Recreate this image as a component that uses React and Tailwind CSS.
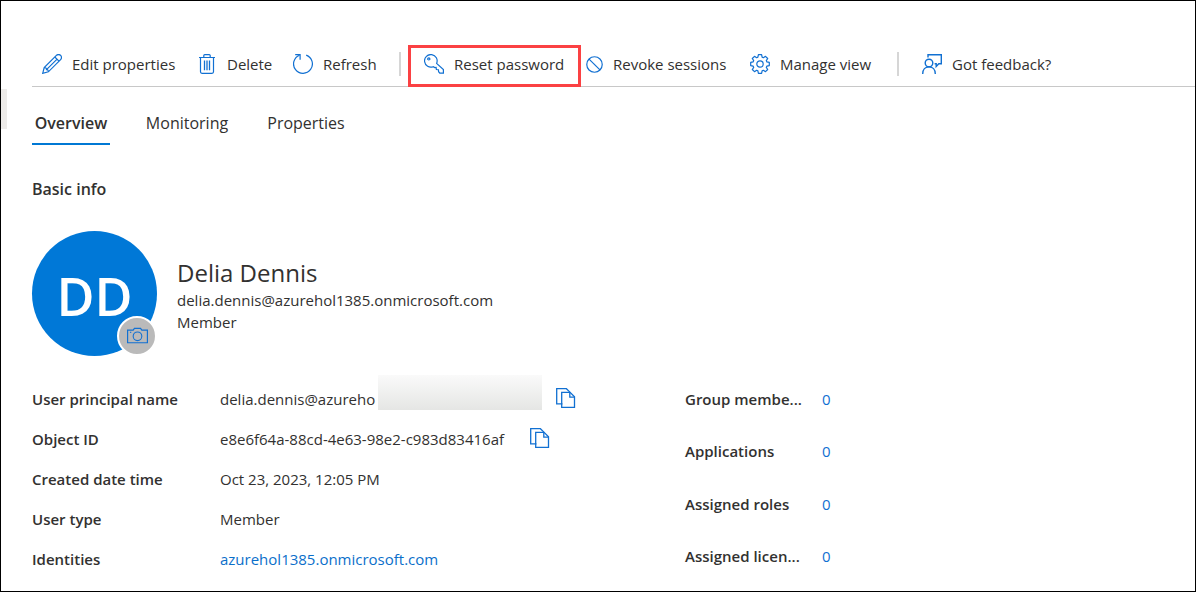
const Icon = ({ children, className = "size-5" }) => (
  <svg
    viewBox="0 0 20 20"
    fill="none"
    stroke="currentColor"
    strokeWidth="1.2"
    aria-hidden="true"
    className={`${className} shrink-0 text-[#1170d2]`}
  >
    {children}
  </svg>
);

const PencilIcon = () => (
  <Icon>
    <path d="M.7 19.3 2.2 13.6 14.4 1.4a2.7 2.7 0 0 1 4.2 4.2L6.4 17.8Z" />
    <path d="M12.8 3 17 7.2M2.2 13.6c1.9.1 2.4.7 2.3 2 1.3-.1 1.9.5 1.9 2.2M4.5 15.6 15.1 5.1" />
  </Icon>
);

const TrashIcon = () => (
  <Icon>
    <path d="M2 3.5h16M6.8 3.3V1.6q0-1 1-1h4.4q1 0 1 1v1.7" strokeWidth="1.2" />
    <path d="M3.5 3.8v14q0 1.5 1.5 1.5h10q1.5 0 1.5-1.5v-14" strokeWidth="1.2" />
    <path d="M7.5 6.5v9.7M10 6.5v9.7M12.5 6.5v9.7" strokeWidth="1.3" />
  </Icon>
);

const RefreshIcon = () => (
  <Icon>
    <path d="M13.2 1.1a9.4 9.4 0 1 1-6.7.1" />
    <path d="M2.2.7h4.9v5" />
  </Icon>
);

const KeyIcon = () => (
  <Icon>
    <path d="M12.6 9.4A6.3 6.3 0 1 0 9.2 12.7l1.6.9 1.3-.1.3 2 2 .2.2 2 1.2 1.5h3.6v-3.6Z" />
    <circle cx="4.8" cy="4.9" r="1.1" />
  </Icon>
);

const BlockIcon = () => (
  <Icon className="size-[17px]">
    <circle cx="10" cy="10" r="9.1" strokeWidth="1.4" />
    <path d="m3.6 3.6 12.8 12.8" strokeWidth="1.4" />
  </Icon>
);

const GearIcon = () => (
  <Icon>
    <path d="M8.4.7h3.2l.5 2.4 1.3.6 2.1-1.4 2.2 2.2-1.4 2.1.6 1.3 2.4.5v3.2l-2.4.5-.6 1.3 1.4 2.1-2.2 2.2-2.1-1.4-1.3.6-.5 2.4H8.4l-.5-2.4-1.3-.6-2.1 1.4-2.2-2.2 1.4-2.1-.6-1.3-2.4-.5V8.4l2.4-.5.6-1.3-1.4-2.1 2.2-2.2 2.1 1.4 1.3-.6Z" strokeLinejoin="round" />
    <circle cx="10" cy="10" r="3.2" />
  </Icon>
);

const FeedbackIcon = () => (
  <Icon>
    <path d="M6 3.6V.7h13.3v9h-2.5l-2.6 2.7V9.7h-1.6" strokeWidth="1.4" />
    <circle cx="7" cy="9" r="3.8" strokeWidth="1.4" />
    <path d="M.7 20c0-4.3 2.6-7.1 6.3-7.1s6.3 2.8 6.3 7.1" strokeWidth="1.4" />
  </Icon>
);

const CameraIcon = () => (
  <Icon className="h-[18px] w-[21px]">
    <path d="M-1 3.5h6.2l1.4-2h6.8l1.4 2H21v14H-1Z" strokeWidth="1.3" />
    <circle cx="10" cy="10.3" r="4.8" />
    <path d="M1.6 5.9h1.5" />
  </Icon>
);

const CopyIcon = () => (
  <Icon>
    <path d="M6.4 15.9H.7V.7h9.7l3.5 3.4" strokeWidth="1.3" />
    <path d="M5.7 4.3h8.4l4.4 4.5v10.5H5.7Z" strokeWidth="1.3" />
    <path d="M13.8 4.5v4.6h4.6" strokeWidth="1.3" />
  </Icon>
);

const Command = ({ icon, label, className }) => (
  <button type="button" className={`flex h-8 shrink-0 items-center gap-[10px] whitespace-nowrap ${className}`}>
    {icon}
    {label}
  </button>
);

const Separator = () => <span className="h-6 w-[2px] shrink-0 bg-[#d6d6d6]" />;

const details = [
  { label: "Object ID", value: "e8e6f64a-88cd-4e63-98e2-c983d83416af", copy: true },
  { label: "Created date time", value: "Oct 23, 2023, 12:05 PM" },
  { label: "User type", value: "Member" },
];

const counts = ["Group membe...", "Applications", "Assigned roles", "Assigned licen..."];

export default function App() {
  return (
    <div className="flex min-h-screen overflow-hidden border border-black bg-white font-['Open_Sans','Noto_Sans',sans-serif] text-[15px] leading-[22px] text-[#323130]">
      <div className="mt-[88px] h-10 w-[6px] shrink-0 bg-[#edebe9]" />
      <main className="min-w-0 flex-1 pl-[25px]">
        <div role="toolbar" aria-label="User commands" className="flex h-[86px] items-end border-b border-[#c8c8c8] pl-[10px]">
          <div className="flex h-[44px] items-center">
            <Command icon={<PencilIcon />} label="Edit properties" className="w-[155px]" />
            <Command icon={<TrashIcon />} label="Delete" className="w-[96px]" />
            <Command icon={<RefreshIcon />} label="Refresh" className="w-[106px]" />
            <Separator />
            <div className="z-10 mt-1 ml-[7px] flex h-[42px] w-[173px] shrink-0 items-center border-[3px] border-[#fb4143] pb-1 pl-[13px]">
              <Command icon={<KeyIcon />} label="Reset password" className="w-[144px]" />
            </div>
            <Command icon={<BlockIcon />} label="Revoke sessions" className="ml-[5px] w-[164px]" />
            <Command icon={<GearIcon />} label="Manage view" className="w-[147px]" />
            <Separator />
            <Command icon={<FeedbackIcon />} label="Got feedback?" className="ml-[23px]" />
          </div>
        </div>

        <nav aria-label="User sections" className="mt-[14px] flex text-[16px]">
          <button type="button" aria-current="page" className="flex h-[44px] w-[78px] items-center justify-center border-b-2 border-[#0078d4] pt-[2px] font-semibold">
            Overview
          </button>
          <button type="button" className="ml-[33px] h-[44px] w-[88px]">Monitoring</button>
          <button type="button" className="ml-[35px] h-[44px] w-[80px]">Properties</button>
        </nav>

        <h2 className="mt-[33px] text-[16px] font-semibold">Basic info</h2>

        <section className="mt-[31px] flex">
          <div className="relative size-[125px] shrink-0">
            <div className="flex size-full items-center justify-center rounded-full bg-[#0078d7] pt-1 text-[52px] font-semibold text-white">DD</div>
            <button type="button" aria-label="Change photo" className="absolute right-0 bottom-0 flex size-10 items-center justify-center rounded-full border-2 border-white bg-[#bababa]">
              <CameraIcon />
            </button>
          </div>
          <div className="ml-5 pt-[26px]">
            <h1 className="text-[24px] leading-8">Delia Dennis</h1>
            <p>delia.dennis@azurehol1385.onmicrosoft.com</p>
            <p>Member</p>
          </div>
        </section>

        <section className="mt-[23px] flex">
          <dl className="w-[653px] shrink-0">
            <div className="flex h-10 items-center">
              <dt className="w-[188px] shrink-0 font-semibold">User principal name</dt>
              <dd className="flex h-10 items-center">
                <span className="w-[158px]">delia.dennis@azureho</span>
                <span className="-mt-[13px] h-[35px] w-[164px] bg-linear-to-b from-[#fafafa] to-[#e5e6e4]" />
                <button type="button" aria-label="Copy user principal name" className="ml-[14px] pb-[2px]">
                  <CopyIcon />
                </button>
              </dd>
            </div>
            {details.map(({ label, value, copy }) => (
              <div key={label} className="flex h-10 items-center">
                <dt className="w-[188px] shrink-0 font-semibold">{label}</dt>
                <dd className="flex items-center gap-[14px]">
                  <span className={copy ? "w-[296px]" : ""}>{value}</span>
                  {copy && (
                    <button type="button" aria-label="Copy object ID" className="pb-[2px]">
                      <CopyIcon />
                    </button>
                  )}
                </dd>
              </div>
            ))}
            <div className="flex h-10 items-center">
              <dt className="w-[188px] shrink-0 font-semibold">Identities</dt>
              <dd>
                <a href="#identities" className="text-[#0b6fca]">azurehol1385.onmicrosoft.com</a>
              </dd>
            </div>
          </dl>
          <dl className="flex h-[197px] flex-col justify-between">
            {counts.map((label) => (
              <div key={label} className="flex h-10 items-center">
                <dt className="w-[137px] font-semibold">{label}</dt>
                <dd>
                  <a href="#count" aria-label={`0, ${label}`} className="text-[#1170d2]">0</a>
                </dd>
              </div>
            ))}
          </dl>
        </section>
      </main>
    </div>
  );
}
